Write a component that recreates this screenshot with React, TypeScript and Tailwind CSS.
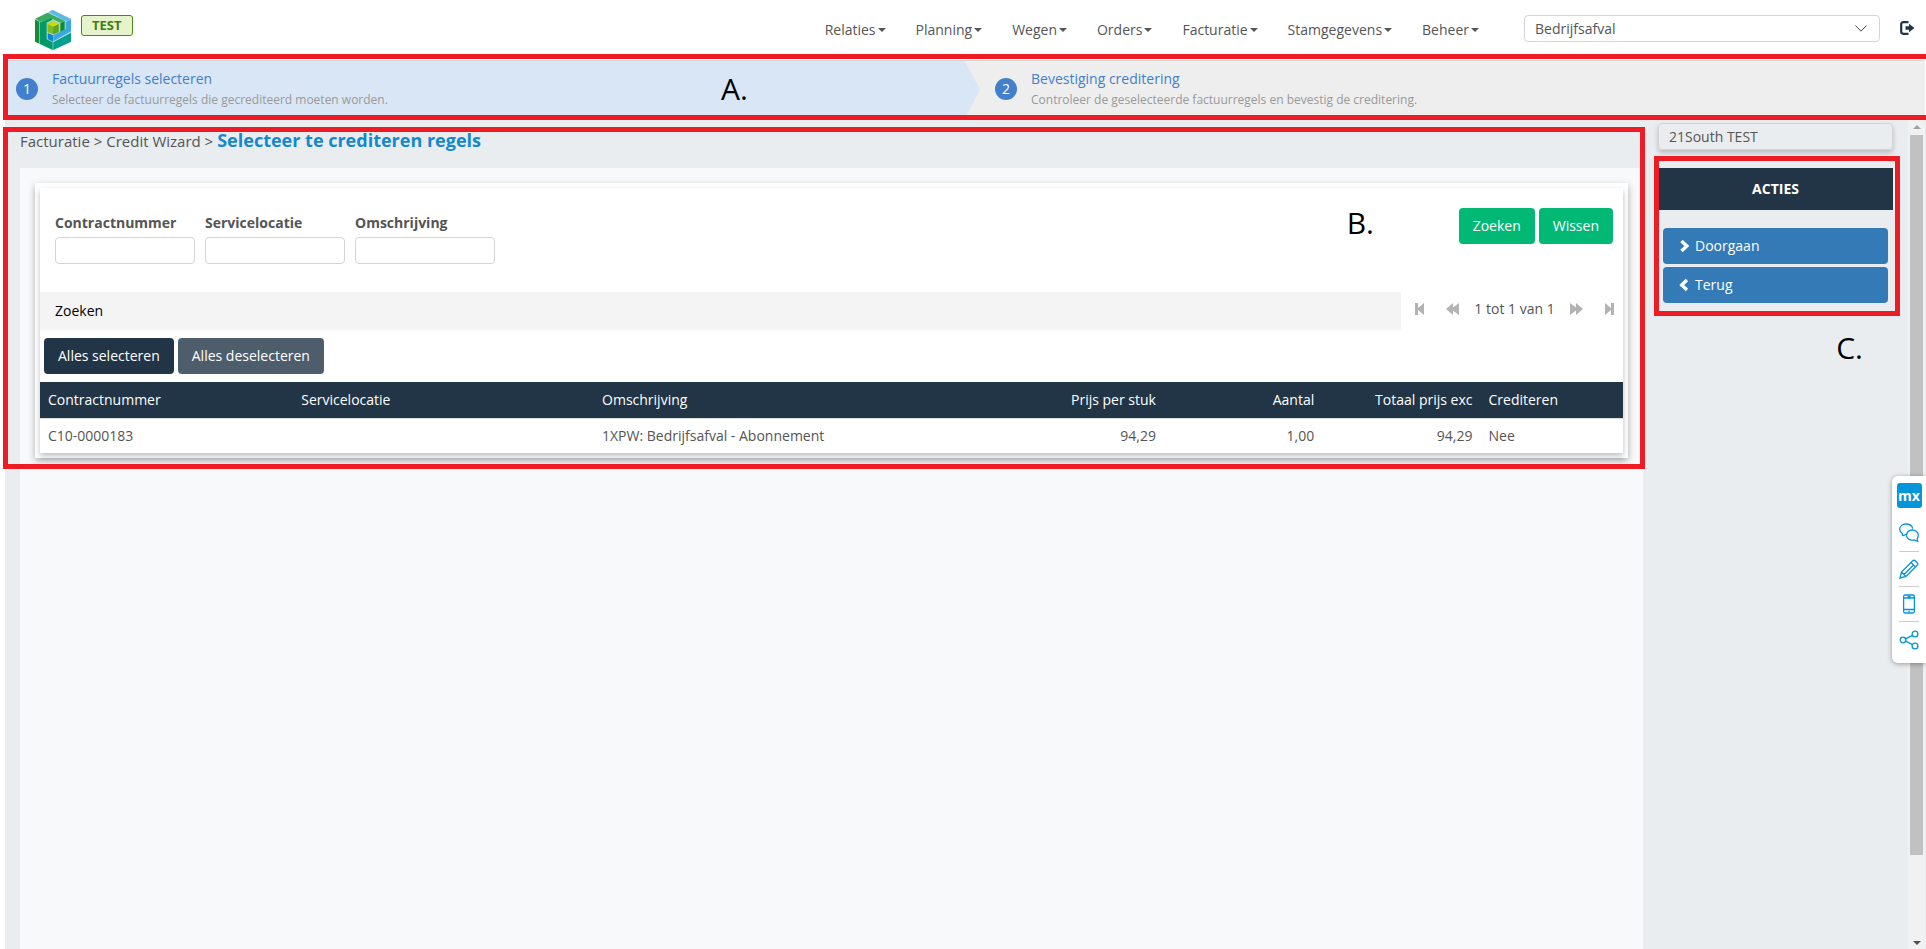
import type { ReactNode } from "react";
import clsx from "clsx";

const menu = ["Relaties", "Planning", "Wegen", "Orders", "Facturatie", "Stamgegevens", "Beheer"];

const steps = [
    { title: "Factuurregels selecteren", text: "Selecteer de factuurregels die gecrediteerd moeten worden." },
    { title: "Bevestiging creditering", text: "Controleer de geselecteerde factuurregels en bevestig de creditering." },
];

const filters = [
    { id: "contractnummer", label: "Contractnummer" },
    { id: "servicelocatie", label: "Servicelocatie" },
    { id: "omschrijving", label: "Omschrijving" },
];

const columns = [
    { label: "Contractnummer", className: "w-[16%]" },
    { label: "Servicelocatie", className: "w-[19%]" },
    { label: "Omschrijving", className: "w-[26%]" },
    { label: "Prijs per stuk", className: "w-[10%] text-right" },
    { label: "Aantal", className: "w-[10%] text-right" },
    { label: "Totaal prijs exc", className: "w-[10%] text-right" },
    { label: "Crediteren", className: "w-[9%]" },
];

const rows = [["C10-0000183", "", "1XPW: Bedrijfsafval - Abonnement", "94,29", "1,00", "94,29", "Nee"]];

const Logo = () => (
    <svg viewBox="105 30 108 120" className="h-10 w-9" aria-label="Logo">
        <path d="M105 57 158 30 213 57V125L158 150 105 125Z" fill="#b5dfd6" />
        <path d="M105 59 118 65V131L105 125Z" fill="#1d8a3a" />
        <path d="M106 56 143 38 194 62 181 68 156 56 120 65Z" fill="#3aaa5c" />
        <path d="M181 69 194 63V91L181 98Z" fill="#12892f" />
        <path d="M120 67 154 55 158 59 140 68V118L158 127V150L120 132Z" fill="#009a68" />
        <path d="M146 36 158 30 213 57 198 64Z" fill="#5db8ea" />
        <path d="M197 66 213 58V94L160 124V105L197 86Z" fill="#36a9e1" />
        <path d="M143 99 159 106V125L143 117Z" fill="#0d86cf" />
        <path d="M160 127 213 98V125L160 150Z" fill="#009f8e" />
        <path d="M160 59 179 69V97L160 104 141 95V69Z" fill="#a6d6a0" />
        <path d="M143 73 159 66 176 73V96L160 103 143 96Z" fill="#7fba1f" />
        <path d="M143 73 159 65 176 73 160 80Z" fill="#d2d800" />
        <path d="M160 80 176 73V96L160 103Z" fill="#5ba526" />
    </svg>
);

const Highlight = ({ className }: { className: string }) => (
    <div className={clsx("pointer-events-none absolute z-20 border-[5px] border-[#ed1c24]", className)} />
);

const Mark = ({ className, children }: { className: string; children: ReactNode }) => (
    <span className={clsx("pointer-events-none absolute z-20 text-[30px] leading-[30px] text-black", className)}>{children}</span>
);

const Header = () => (
    <header className="flex h-[60px] items-start pr-[11px] pl-[35px]">
        <a href="#" className="pt-[10px]">
            <Logo />
        </a>
        <span className="mt-[15px] ml-[10px] rounded-[3px] border border-[#4a8a0c] bg-[#e5f4cd] px-[10px] text-[13px] leading-[19px] font-bold text-[#437d0b]">
            TEST
        </span>
        <nav className="mt-5 ml-auto flex gap-[30px]">
            {menu.map((item) => (
                <a key={item} href="#" className="flex items-center gap-[2px] leading-5">
                    {item}
                    <svg viewBox="0 0 8 4" className="h-1 w-2 fill-current">
                        <path d="M0 0H8L4 4Z" />
                    </svg>
                </a>
            ))}
        </nav>
        <div className="relative mt-[15px] ml-[45px] w-[356px]">
            <select aria-label="Afdeling" className="h-[27px] w-full appearance-none rounded border border-[#d4d4d4] bg-white px-[10px] leading-5">
                <option>Bedrijfsafval</option>
            </select>
            <svg viewBox="0 0 12 7" className="pointer-events-none absolute top-[10px] right-[13px] h-[7px] w-3 fill-none stroke-[#444]">
                <path d="M.5.5 6 6.2 11.5.5" />
            </svg>
        </div>
        <button aria-label="Uitloggen" className="mt-[21px] ml-5 text-[#213547]">
            <svg viewBox="0 0 15 14" className="h-[14px] w-[15px]">
                <path d="M8.5 1.2H3.4Q1.2 1.2 1.2 3.4V10.6Q1.2 12.8 3.4 12.8H8.5" className="fill-none stroke-current stroke-[2.2]" />
                <path d="M5.5 5.3H9V2.8L14.4 7 9 11.2V8.7H5.5Z" className="fill-current" />
            </svg>
        </button>
    </header>
);

const Stepper = () => (
    <div className="relative mr-px ml-[5px]">
        <ol className="flex h-[58px] overflow-hidden rounded-t border-t border-[#d4d4d4] bg-[#eee]">
            {steps.map((step, index) => (
                <li key={step.title} className={clsx("flex w-1/2 pt-2", index === 0 ? "bg-[#d9e6f5] pl-[11px]" : "relative pl-[30px]")}>
                    {index > 0 && (
                        <svg viewBox="0 0 15 58" preserveAspectRatio="none" className="absolute top-0 left-0 h-full w-[15px] fill-[#d9e6f5]">
                            <path d="M0 0 15 29 0 58Z" />
                        </svg>
                    )}
                    <span className="mt-[9px] flex size-[22px] items-center justify-center rounded-full bg-[#427fcc] text-white">{index + 1}</span>
                    <div className="ml-[14px]">
                        <h2 className="leading-5 text-[#427fcc]">{step.title}</h2>
                        <p className="text-xs leading-[22px] text-[#999]">{step.text}</p>
                    </div>
                </li>
            ))}
        </ol>
        <Highlight className="-top-[6px] -right-2 -bottom-[2px] -left-[2px]" />
        <Mark className="top-[14px] left-[716px]">A.</Mark>
    </div>
);

const pagerIcon = "fill-[#b3b3b3] h-3";

const Pager = () => (
    <div className="flex h-[34px] w-[222px] items-center justify-between pr-[9px] pl-[14px]">
        <button aria-label="Eerste">
            <svg viewBox="0 0 9 12" className={clsx(pagerIcon, "w-[9px]")}>
                <path d="M0 0H3V5L9 0V12L3 7V12H0Z" />
            </svg>
        </button>
        <div className="flex items-center gap-[15px]">
            <button aria-label="Vorige">
                <svg viewBox="0 0 13 12" className={clsx(pagerIcon, "w-[13px]")}>
                    <path d="M7 0V4.5L13 0V12L7 7.500V12L0 6Z" />
                </svg>
            </button>
            <span>1 tot 1 van 1</span>
            <button aria-label="Volgende">
                <svg viewBox="0 0 13 12" className={clsx(pagerIcon, "w-[13px]")}>
                    <path d="M6 0V4.5L0 0V12L6 7.500V12L13 6Z" />
                </svg>
            </button>
        </div>
        <button aria-label="Laatste">
            <svg viewBox="0 0 9 12" className={clsx(pagerIcon, "w-[9px]")}>
                <path d="M9 0H6V5L0 0V12L6 7V12H9Z" />
            </svg>
        </button>
    </div>
);

const Card = () => (
    <div className="border-[5px] border-white/80 bg-white shadow-[0_3px_7px_rgba(0,0,0,0.3)]">
        <div className="bg-white shadow-[0_3px_6px_rgba(0,0,0,0.25)]">
            <form className="flex items-start px-[10px] pt-5 pl-[15px]" onSubmit={(e) => e.preventDefault()}>
                <div className="flex h-[84px] gap-[10px] pt-[5px]">
                    {filters.map((filter) => (
                        <div key={filter.id} className="w-[140px]">
                            <label htmlFor={filter.id} className="block h-6 leading-5 font-bold">
                                {filter.label}
                            </label>
                            <input id={filter.id} type="text" className="h-[27px] w-full rounded border border-[#d4d4d4] bg-white px-2" />
                        </div>
                    ))}
                </div>
                <div className="ml-auto flex gap-1">
                    <button type="submit" className="h-9 rounded bg-[#02b875] px-[14px] text-white">
                        Zoeken
                    </button>
                    <button type="reset" className="h-9 rounded bg-[#02b875] px-[14px] text-white">
                        Wissen
                    </button>
                </div>
            </form>
            <div className="flex">
                <button className="h-[38px] flex-1 bg-[#f4f4f4] px-[15px] text-left text-black">Zoeken</button>
                <Pager />
            </div>
            <div className="flex gap-1 px-1 py-2">
                <button className="h-9 rounded bg-[#213547] px-[14px] text-white">Alles selecteren</button>
                <button className="h-9 rounded bg-[#4e5d6b] px-[14px] text-white">Alles deselecteren</button>
            </div>
            <table className="w-full table-fixed">
                <thead className="bg-[#213547] text-left text-white">
                    <tr className="h-9">
                        {columns.map((column) => (
                            <th key={column.label} className={clsx("px-2 font-normal", column.className)}>
                                {column.label}
                            </th>
                        ))}
                    </tr>
                </thead>
                <tbody>
                    {rows.map((row) => (
                        <tr key={row[0]} className="h-[35px] border-t border-[#ddd]">
                            {row.map((value, index) => (
                                <td key={index} className={clsx("px-2", columns[index].className)}>
                                    {value}
                                </td>
                            ))}
                        </tr>
                    ))}
                </tbody>
            </table>
        </div>
    </div>
);

const Content = () => (
    <main className="relative flex flex-1 flex-col pl-[15px]">
        <div className="flex h-[50px] items-baseline gap-1 pt-[10px]">
            <span className="text-[15px]">Facturatie &gt; Credit Wizard &gt;</span>
            <h1 className="text-lg leading-6 font-bold text-[#1388cf]">Selecteer te crediteren regels</h1>
        </div>
        <section className="flex-1 bg-[#f7f9fb] p-[15px]">
            <Card />
        </section>
        <Highlight className="top-[9px] -right-[2px] -left-[2px] h-[342px]" />
        <Mark className="top-[90px] right-[269px]">B.</Mark>
    </main>
);

const Sidebar = () => (
    <aside className="w-[265px] px-[15px] pt-[5px]">
        <div className="h-[27px] rounded border border-[#d4d4d4] px-[10px] leading-[25px] shadow-[0_3px_5px_rgba(0,0,0,0.2)]">21South TEST</div>
        <div className="relative mt-[18px]">
            <h2 className="bg-[#213547] text-center leading-[42px] font-bold text-white">ACTIES</h2>
            <div className="flex flex-col gap-[3px] px-[5px] pt-[18px]">
                <button className="flex h-9 items-center gap-[5px] rounded bg-[#337ab7] px-4 text-white">
                    <svg viewBox="0 0 11 14" className="h-[14px] w-[11px] fill-none stroke-current stroke-[3.4]">
                        <path d="M2.500 2 7.800 7 2.500 12" />
                    </svg>
                    Doorgaan
                </button>
                <button className="flex h-9 items-center gap-[5px] rounded bg-[#337ab7] px-4 text-white">
                    <svg viewBox="0 0 11 14" className="h-[14px] w-[11px] fill-none stroke-current stroke-[3.4]">
                        <path d="M8 2 2.700 7 8 12" />
                    </svg>
                    Terug
                </button>
            </div>
            <Highlight className="-top-3 -right-[7px] -bottom-[13px] -left-1" />
            <Mark className="right-[30px] -bottom-[60px]">C.</Mark>
        </div>
    </aside>
);

const Scrollbar = () => (
    <div className="mr-px flex w-[17px] flex-col items-center bg-[#f1f1f1] pt-[7px] pb-1" aria-hidden="true">
        <svg viewBox="0 0 8 4" className="mb-[6px] h-1 w-2 fill-[#a3a3a3]">
            <path d="M4 0 8 4H0Z" />
        </svg>
        <div className="h-[720px] w-[13px] bg-[#c1c1c1]" />
        <svg viewBox="0 0 8 4" className="mt-auto h-1 w-2 fill-[#505050]">
            <path d="M4 4 8 0H0Z" />
        </svg>
    </div>
);

const toolIcon = "size-5 fill-none stroke-[#0595db] stroke-[1.3]";

const Toolbar = () => (
    <div className="absolute top-[476px] right-0 flex h-[187px] w-[34px] flex-col items-center rounded-l-md bg-white pt-[7px] shadow-[0_1px_5px_rgba(0,0,0,0.35)]">
        <button className="h-[25px] w-[25px] rounded-[3px] bg-[#0595db] text-sm leading-5 font-bold text-white">mx</button>
        <div className="flex flex-col divide-y divide-[#ccc]">
            <button aria-label="Feedback" className="flex h-[44px] items-end pb-2">
                <svg viewBox="0 0 20 20" className={toolIcon}>
                    <path d="M3 12.500Q3.600 11.500 3.300 10.500Q.7 9 .7 6.200C.7 3 3.500 1 7 1S13.500 3 13.700 5.800M3 12.500Q5.500 12.600 7 11.300" />
                    <path d="M13.200 7C10 7 7.500 9.200 7.500 12S10 17.200 13.200 17.200Q14.400 17.200 15.300 16.900Q16.800 18.300 18.800 18.200Q18 17 18.200 15.500Q19.400 14 19.300 12C19.200 9.200 16.500 7 13.200 7Z" />
                </svg>
            </button>
            <button aria-label="Bewerken" className="flex h-[35px] items-center">
                <svg viewBox="0 0 20 20" className={toolIcon}>
                    <path d="M1 19 2.500 13 13.700 1.800Q15 .6 16.300 1.800L18.200 3.700Q19.400 5 18.200 6.300L7 17.500ZM2.500 13 7 17.500M12 3.500 16.500 8M14.500 6 5 15.500" />
                </svg>
            </button>
            <button aria-label="Mobiel" className="flex h-[35px] items-center">
                <svg viewBox="0 0 20 20" className={toolIcon}>
                    <rect x="4.600" y="1" width="10.800" height="18" rx="1.500" />
                    <path d="M4.600 4H15.400M4.600 15.500H15.400M8.500 2.500H11.500M9.300 17.300H10.700" />
                </svg>
            </button>
            <button aria-label="Delen" className="flex h-[35px] items-center">
                <svg viewBox="0 0 20 20" className={toolIcon}>
                    <circle cx="4" cy="10" r="2.800" />
                    <circle cx="16" cy="4" r="2.900" />
                    <circle cx="16" cy="16" r="2.900" />
                    <path d="M6.600 8.800 13.400 5.300M6.600 11.200 13.400 14.700" />
                </svg>
            </button>
        </div>
    </div>
);

const App = () => (
    <div className="relative flex min-h-screen flex-col overflow-hidden bg-white font-['Open_Sans',sans-serif] text-sm text-[#555]">
        <Header />
        <Stepper />
        <div className="ml-[5px] flex flex-1 bg-[#e9edf0]">
            <Content />
            <Sidebar />
            <Scrollbar />
        </div>
        <Toolbar />
    </div>
);

export default App;
